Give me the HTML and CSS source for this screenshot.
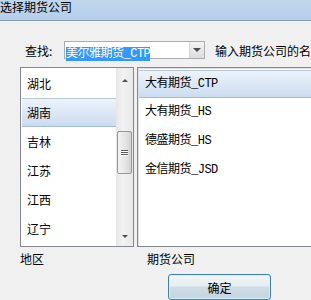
FILE: index.html
```html
<!DOCTYPE html>
<html lang="zh-CN">
<head>
  <meta charset="UTF-8" />
  <title>选择期货公司</title>
  <link rel="stylesheet" href="styles.css">
</head>
<body>
  <div class="window">
    <div class="titlebar">选择期货公司</div>

    <div class="search">
      <label for="broker">查找:</label>
      <div class="combo">
        <span class="combo-text"><span class="sel">美尔雅期货_CTP</span></span>
        <span class="combo-btn"><i class="tri-down"></i></span>
      </div>
      <span class="hint">输入期货公司的名称</span>
    </div>

    <div class="panes">
      <div class="col col-left">
        <div class="list">
          <ul class="items">
            <li>湖北</li>
            <li class="active">湖南</li>
            <li>吉林</li>
            <li>江苏</li>
            <li>江西</li>
            <li>辽宁</li>
          </ul>
          <div class="scrollbar">
            <i class="tri-up"></i>
            <div class="thumb"><span></span><span></span><span></span></div>
            <i class="tri-down small"></i>
          </div>
        </div>
        <div class="caption">地区</div>
      </div>

      <div class="col col-right">
        <div class="list">
          <ul class="items mixed">
            <li class="active">大有期货_CTP</li>
            <li>大有期货_HS</li>
            <li>德盛期货_HS</li>
            <li>金信期货_JSD</li>
          </ul>
        </div>
        <div class="caption">期货公司</div>
      </div>
    </div>

    <div class="actions">
      <button type="button">确定</button>
    </div>
  </div>
</body>
</html>
```

FILE: styles.css
```css
body {
  margin: 0;
  padding: 0;
  width: 311px;
  height: 300px;
  overflow: hidden;
  background: #f0f0f0;
  font-family: "Noto Sans CJK SC", "DejaVu Sans", sans-serif;
  font-size: 12px;
  color: #000;
}

.window {
  width: 311px;
  height: 300px;
  overflow: hidden;
}

.titlebar {
  height: 20px;
  line-height: 14px;
  background: linear-gradient(#c0d7ee, #b6cfe9);
  border-bottom: 1px solid #8a9bb0;
  white-space: nowrap;
  font-size: 12px;
}

.search {
  display: flex;
  align-items: center;
  margin-top: 20px;
  padding-left: 25px;
  height: 18px;
  white-space: nowrap;
}

.search > * {
  flex-shrink: 0;
}

.search label {
  width: 39px;
}

.combo {
  display: flex;
  width: 141px;
  height: 18px;
  box-sizing: border-box;
  border: 1px solid #abadb3;
  background: #fff;
}

.combo-text {
  flex: 1;
  padding: 1px 0 0 1px;
}

.sel {
  display: inline-block;
  height: 14px;
  line-height: 14px;
  background: #3399ff;
  color: #fff;
  font-family: "Liberation Mono", "Noto Sans CJK SC", monospace;
  letter-spacing: -0.5px;
}

.combo-btn {
  width: 14px;
  border-left: 1px solid #d6d6d6;
  background: linear-gradient(#f4f4f4, #dcdcdc);
  display: flex;
  align-items: center;
  justify-content: center;
}

.tri-down {
  width: 0;
  height: 0;
  border-left: 4px solid transparent;
  border-right: 4px solid transparent;
  border-top: 4px solid #4d4d4d;
}

.tri-up {
  width: 0;
  height: 0;
  border-left: 3px solid transparent;
  border-right: 3px solid transparent;
  border-bottom: 3px solid #4d4d4d;
}

.tri-down.small {
  border-left-width: 3px;
  border-right-width: 3px;
  border-top-width: 3px;
}

.hint {
  margin-left: 10px;
}

.panes {
  display: flex;
  margin-top: 8px;
  padding-left: 20px;
  gap: 3px;
}

.col-left {
  width: 114px;
  flex-shrink: 0;
}

.col-right {
  width: 200px;
  flex-shrink: 0;
}

.list {
  height: 180px;
  box-sizing: border-box;
  border: 1px solid #828790;
  background: #fff;
  display: flex;
  overflow: hidden;
}

.col-right .list {
  border-right: none;
  box-shadow: inset 1px 1px 0 #dfe1e5;
}

.items {
  list-style: none;
  margin: 0;
  padding: 1px 0 0 1px;
  flex: 1;
}

.items li {
  height: 29px;
  line-height: 29px;
  padding-left: 5px;
  box-sizing: border-box;
  white-space: nowrap;
}

.items li.active {
  background: linear-gradient(#edf3fb, #cbdcf0);
  border-top: 1px solid #b6c7da;
  border-bottom: 1px solid #a3bbd6;
  line-height: 27px;
}

.mixed li {
  padding-left: 6px;
  font-family: "Liberation Mono", "Noto Sans CJK SC", monospace;
  letter-spacing: -0.5px;
}

.col-right .items {
  padding: 2px 0 0 1px;
}

.col-right .items li.active {
  height: 28px;
  line-height: 26px;
}

.scrollbar {
  width: 17px;
  background: linear-gradient(90deg, #e6e6e6, #f2f2f2 40%, #e9e9e9);
  display: flex;
  flex-direction: column;
  align-items: center;
}

.scrollbar .tri-up {
  margin-top: 11px;
}

.thumb {
  width: 15px;
  height: 43px;
  box-sizing: border-box;
  margin-top: 49px;
  border: 1px solid #979797;
  border-radius: 2px;
  background: linear-gradient(90deg, #f3f3f3, #e6e6e6 50%, #d4d4d4);
  display: flex;
  flex-direction: column;
  align-items: center;
  justify-content: center;
  gap: 1px;
}

.thumb span {
  width: 7px;
  height: 1px;
  background: #5a5a5a;
  box-shadow: 0 1px 0 #fff;
}

.scrollbar .tri-down {
  margin-top: auto;
  margin-bottom: 8px;
}

.caption {
  margin-top: 5px;
  line-height: 14px;
}

.col-right .caption {
  padding-left: 10px;
}

.actions {
  padding-left: 168px;
  margin-top: 8px;
}

button {
  width: 103px;
  height: 26px;
  font-family: inherit;
  font-size: 12px;
  color: #000;
  border: 1px solid #3c7fb1;
  border-radius: 3px;
  background: linear-gradient(#f0f5f8 0, #e6eef3 45%, #cfdce5 50%, #c4d5df 100%);
  box-shadow: inset 0 0 0 1px #d8f0fa;
  padding: 0;
}
```
